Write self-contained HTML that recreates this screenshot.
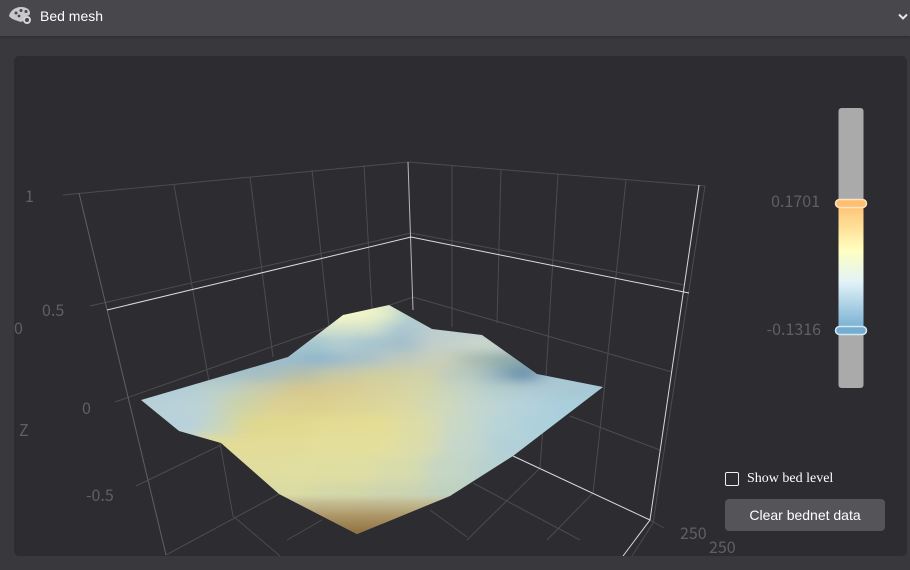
<!DOCTYPE html>
<html><head><meta charset="utf-8"><style>
html,body{margin:0;padding:0;width:910px;height:570px;overflow:hidden;background:#38383d;font-family:"Liberation Sans",sans-serif}
.hd{position:absolute;left:0;top:0;width:910px;height:36px;background:#47474c;box-shadow:0 1px 3px rgba(0,0,0,.25)}
.hd span{position:absolute;left:40px;top:8px;font-size:14px;line-height:17px;color:#fff}
.panel{position:absolute;left:14px;top:56px;width:893px;height:500px;background:#2d2d31;border-radius:5px;overflow:hidden}
svg.ch{position:absolute;left:0;top:0}
.cb{position:absolute;left:725px;top:472px;width:12px;height:12px;border:1px solid #eee;border-radius:2px}
.cl{position:absolute;left:747px;top:470px;font:14px/17px "Liberation Serif",serif;color:#fff}
.btn{position:absolute;left:725px;top:499px;width:160px;height:32px;background:#545459;border-radius:4px;color:#fff;font-size:14px;line-height:32px;text-align:center}
</style></head><body>
<div class="hd"><span>Bed mesh</span>
<svg style="position:absolute;left:8px;top:5px" width="24" height="20" viewBox="0 0 24 20">
<path d="M1 11C2 6 7 2 13 2c5 0 9 2 9 6 0 2-2 3-4 3-2 1-3 3-3 5-1 1-3 1-5 0-3-1-7-2-9-5z" fill="#c9c9cc"/>
<circle cx="8" cy="8" r="1.5" fill="#47474c"/><circle cx="13" cy="5.500" r="1.500" fill="#47474c"/><circle cx="18" cy="6.500" r="1.500" fill="#47474c"/><circle cx="11" cy="11" r="1.400" fill="#47474c"/>
<circle cx="19" cy="15" r="3" fill="none" stroke="#d5d5d8" stroke-width="2"/></svg>
<svg style="position:absolute;left:898px;top:13px" width="10" height="8" viewBox="0 0 10 8"><path d="M1 1.500L5 5.500 9 1.500" fill="none" stroke="#e6e6ea" stroke-width="2"/></svg>
</div>
<div class="panel"></div>
<svg class="ch" width="910" height="570" viewBox="0 0 910 570" style="font-family:'Liberation Sans','Noto Sans CJK SC',sans-serif">
<defs>
<clipPath id="pc"><rect x="14" y="56" width="893" height="500" rx="5"/></clipPath>
<clipPath id="sf"><path d="M141 400L179 431 221 443 279 494 357 534 450 496 513 456 603 387 537 374 482 335 432 329 389 305 343 315 288 357Z"/></clipPath>
<linearGradient id="bot" gradientUnits="userSpaceOnUse" x1="357" y1="494" x2="357" y2="534"><stop offset="0" stop-color="#c7c29e" stop-opacity="0"/><stop offset=".2" stop-color="#c0b68e" stop-opacity=".8"/><stop offset=".55" stop-color="#ac9566"/><stop offset="1" stop-color="#8f7040"/></linearGradient>
<linearGradient id="bar" x1="0" y1="0" x2="0" y2="1"><stop offset="0" stop-color="#febf70"/><stop offset=".37" stop-color="#ffffbf"/><stop offset=".62" stop-color="#e2f3f8"/><stop offset="1" stop-color="#74add1"/></linearGradient>
<filter id="bl" filterUnits="userSpaceOnUse" x="100" y="270" width="550" height="300"><feGaussianBlur stdDeviation="11 5"/></filter>
</defs>
<g clip-path="url(#pc)" fill="none" stroke="#4c4c50" stroke-width="1">
<path d="M63 195L408 162"/>
<path d="M408 162L705 186"/>
<path d="M174 185L233 516M250 177L273 357M312 170L329 327M364 165L372 310"/>
<path d="M452 166L452 327M501 170L497 323M558 174L543 427 540 468M626 180L600 430 593 493"/>
<path d="M90 306L411 233 685 285"/>
<path d="M115 402L413 297 672 372"/>
<path d="M136 486L221 445M570 416L660 450"/>
<path d="M705 186L653 523 632 556M650 520L664 528"/>
<path d="M166 555L279 494M233 516L280 556M287 540L322 520M473 483L580 540M430 510L467 537M540 468L467 540M593 493L547 540"/>
<path stroke="#606064" d="M79 193L166 555"/>
<path stroke="#b8b8b8" d="M408 162L413 310"/>
<path stroke="#d8d8d8" d="M699 185L650 520 623 556"/>
<path stroke="#dcdcdc" d="M107 310L411 237 689 293M513 456L650 520"/>
</g>
<g clip-path="url(#sf)">
<g filter="url(#bl)">
<rect x="100" y="270" width="550" height="300" fill="#b9d1d8"/>
<!-- row tiles -->
<g shape-rendering="crispEdges">
<rect x="300" y="290" width="56" height="32" fill="#f6f8c8"/><rect x="356" y="290" width="24" height="32" fill="#eef3c8"/><rect x="380" y="290" width="20" height="32" fill="#dfeac8"/><rect x="400" y="290" width="20" height="32" fill="#a8c8d0"/><rect x="420" y="290" width="80" height="32" fill="#b8cfd0"/>
<rect x="300" y="322" width="85" height="13" fill="#d4e2cc"/><rect x="385" y="322" width="35" height="13" fill="#a8c6d0"/><rect x="420" y="322" width="80" height="13" fill="#bccfcf"/>
<rect x="270" y="335" width="60" height="17" fill="#a5c6cf"/><rect x="330" y="335" width="20" height="17" fill="#b6d0d0"/><rect x="350" y="335" width="30" height="17" fill="#a8c6d0"/><rect x="380" y="335" width="40" height="17" fill="#a4bfcb"/><rect x="420" y="335" width="40" height="17" fill="#c2cfcb"/><rect x="460" y="335" width="60" height="17" fill="#c9d5cc"/>
<rect x="130" y="352" width="170" height="15" fill="#9cbccc"/><rect x="300" y="352" width="40" height="15" fill="#92b7cb"/><rect x="340" y="352" width="40" height="15" fill="#a7c0c8"/><rect x="380" y="352" width="40" height="15" fill="#bfc9bd"/><rect x="420" y="352" width="40" height="15" fill="#c9cfb9"/><rect x="460" y="352" width="30" height="15" fill="#a8bbb0"/><rect x="490" y="352" width="40" height="15" fill="#8eabab"/><rect x="530" y="352" width="80" height="15" fill="#7197b0"/>
<rect x="130" y="367" width="110" height="15" fill="#a6c4cf"/><rect x="240" y="367" width="40" height="15" fill="#a5bfc1"/><rect x="280" y="367" width="40" height="15" fill="#b4c0ac"/><rect x="320" y="367" width="40" height="15" fill="#c8c9a4"/><rect x="360" y="367" width="40" height="15" fill="#d0cfa0"/><rect x="400" y="367" width="40" height="15" fill="#d0d2a8"/><rect x="440" y="367" width="40" height="15" fill="#bbcac0"/><rect x="480" y="367" width="25" height="15" fill="#9bb8c0"/><rect x="505" y="367" width="35" height="15" fill="#6c93ad"/><rect x="540" y="367" width="80" height="15" fill="#a9c7d2"/>
<rect x="130" y="382" width="70" height="15" fill="#b2ced8"/><rect x="200" y="382" width="40" height="15" fill="#bccfc8"/><rect x="240" y="382" width="40" height="15" fill="#c9ccaa"/><rect x="280" y="382" width="40" height="15" fill="#d6c88e"/><rect x="320" y="382" width="40" height="15" fill="#d8cc92"/><rect x="360" y="382" width="40" height="15" fill="#d8d19c"/><rect x="400" y="382" width="40" height="15" fill="#d4d6a8"/><rect x="440" y="382" width="40" height="15" fill="#c4d4c2"/><rect x="480" y="382" width="40" height="15" fill="#b4cdce"/><rect x="520" y="382" width="40" height="15" fill="#aecad4"/><rect x="560" y="382" width="60" height="15" fill="#a6c8d4"/>
<rect x="130" y="397" width="50" height="18" fill="#b8d0d8"/><rect x="180" y="397" width="40" height="18" fill="#bcd3d6"/><rect x="220" y="397" width="40" height="18" fill="#ccd3a8"/><rect x="260" y="397" width="40" height="18" fill="#dcd093"/><rect x="300" y="397" width="40" height="18" fill="#dcd08e"/><rect x="340" y="397" width="40" height="18" fill="#dcd496"/><rect x="380" y="397" width="40" height="18" fill="#dcd8a0"/><rect x="420" y="397" width="40" height="18" fill="#d0d9b8"/><rect x="460" y="397" width="40" height="18" fill="#c2d6d0"/><rect x="500" y="397" width="40" height="18" fill="#b6d2da"/><rect x="540" y="397" width="70" height="18" fill="#aacfdc"/>
<rect x="130" y="415" width="75" height="20" fill="#b8d2dc"/><rect x="205" y="415" width="30" height="20" fill="#c8d5bc"/><rect x="235" y="415" width="35" height="20" fill="#dfd88f"/><rect x="270" y="415" width="45" height="20" fill="#e1d98f"/><rect x="315" y="415" width="45" height="20" fill="#e3dc95"/><rect x="360" y="415" width="40" height="20" fill="#e4dd95"/><rect x="400" y="415" width="40" height="20" fill="#dcdca8"/><rect x="440" y="415" width="40" height="20" fill="#c8d8c8"/><rect x="480" y="415" width="40" height="20" fill="#b8d4d8"/><rect x="520" y="415" width="60" height="20" fill="#acd0dc"/>
<rect x="190" y="435" width="65" height="22" fill="#e2dc98"/><rect x="255" y="435" width="55" height="22" fill="#e2dc98"/><rect x="310" y="435" width="50" height="22" fill="#e3df9b"/><rect x="360" y="435" width="40" height="22" fill="#e3df9b"/><rect x="400" y="435" width="40" height="22" fill="#dadcac"/><rect x="440" y="435" width="45" height="22" fill="#c4d7cc"/><rect x="485" y="435" width="60" height="22" fill="#b2d0d8"/>
<rect x="220" y="457" width="60" height="25" fill="#e0dd9f"/><rect x="280" y="457" width="45" height="25" fill="#e0dea0"/><rect x="325" y="457" width="50" height="25" fill="#dfdea2"/><rect x="375" y="457" width="50" height="25" fill="#d8dcac"/><rect x="425" y="457" width="45" height="25" fill="#c4d6c4"/><rect x="470" y="457" width="50" height="25" fill="#b8d2d0"/>
<rect x="250" y="482" width="65" height="60" fill="#dadca4"/><rect x="315" y="482" width="55" height="60" fill="#d4d8a8"/><rect x="370" y="482" width="55" height="60" fill="#ccd4b0"/><rect x="425" y="482" width="50" height="60" fill="#bfd2c0"/>
</g>
</g>
<path d="M260 486H470V540H260Z" fill="url(#bot)"/>
</g>
<g font-size="16" fill="#606063" clip-path="url(#pc)" style="font-family:'Noto Sans CJK SC','Liberation Sans',sans-serif">
<text x="25" y="202">1</text><text x="42" y="316">0.5</text><text x="14" y="334">0</text><text x="82" y="414">0</text><text x="19" y="436">Z</text><text x="86" y="501">-0.5</text>
<text x="680" y="539">250</text><text x="709" y="553">250</text>
<text x="820" y="207" text-anchor="end">0.1701</text><text x="821" y="335" text-anchor="end">-0.1316</text>
</g>
<rect x="838.500" y="108" width="25" height="280" rx="3" fill="#aaaaaa"/>
<rect x="838.500" y="203" width="25" height="127" fill="url(#bar)"/>
<rect x="835.500" y="199.500" width="31" height="8" rx="4" fill="#febf70" stroke="#ffe2c0" stroke-width="1.500"/>
<rect x="835.500" y="326.500" width="31" height="8" rx="4" fill="#74add1" stroke="#d5e8f2" stroke-width="1.500"/>
</svg>
<div class="cb"></div><div class="cl">Show bed level</div>
<div class="btn">Clear bednet data</div>
</body></html>
